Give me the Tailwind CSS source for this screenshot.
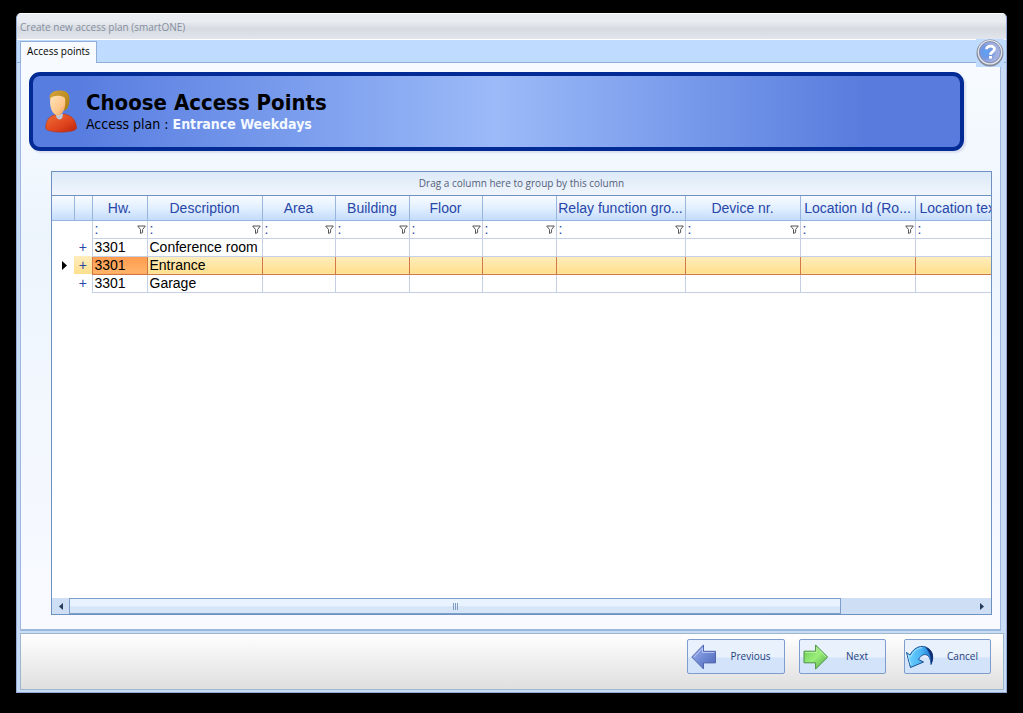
<!DOCTYPE html>
<html lang="en">
<head>
<meta charset="utf-8">
<title>Create new access plan (smartONE)</title>
<script src="https://cdn.jsdelivr.net/npm/@tailwindcss/browser@4"></script>
</head>
<body class="flex h-screen bg-black px-4 pt-[13px] pb-5 font-['Open_Sans',sans-serif] text-[10px] text-black">
<svg class="hidden" aria-hidden="true">
  <symbol id="funnel" viewBox="0 0 9 9"><path d="M.7 1h7.6L5.6 4.5V7.6L3.5 8.4V4.5Z" fill="#fff" stroke="#555" stroke-width="1"/></symbol>
</svg>
<main class="relative flex min-w-0 flex-1 flex-col rounded-t-[5px] border border-[#92aad5] border-t-white bg-[#c9dcf6] px-[3px] pb-[2px]">
  <header class="-mx-[3px] flex h-[26px] shrink-0 items-center rounded-t border-b border-white bg-linear-to-b from-[#e9ecf0] from-30% via-[#d6dae1] via-60% to-[#e2e6ec] px-[3px] pt-[2px] text-[#858e9e]"><h1>Create new access plan (smartONE)</h1></header>
  <nav class="-mx-[3px] flex h-[23px] shrink-0 items-end border-b border-[#8fafd9] bg-[#bfdbff] px-[3px]" role="tablist">
    <button role="tab" aria-selected="true" class="-mb-px h-[22px] w-[77px] border border-b-0 border-[#8fafd9] bg-[#f7fbff] pb-[2px] text-center whitespace-nowrap">Access points</button>
  </nav>
  <button aria-label="Help" class="absolute top-[25px] right-[2px] flex size-7 items-center justify-center bg-[#bfdbff]">
    <svg viewBox="0 0 28 28" class="size-7"><defs><radialGradient id="help" cx=".3" cy=".5"><stop offset="0" stop-color="#5aa2f6"/><stop offset=".55" stop-color="#7396e2"/><stop offset="1" stop-color="#a0b0e0"/></radialGradient></defs><circle cx="14" cy="14" r="13.5" fill="#858b9c"/><circle cx="14" cy="13.200" r="12.300" fill="#e3e5ec"/><circle cx="14" cy="13.200" r="10.600" fill="url(#help)" stroke="#818bae"/><path d="M10.500 10.300c.2-4 8-4.200 8-.3 0 2.500-4 2.800-4 5.800" fill="none" stroke="#fff" stroke-width="2.700"/><rect x="13" y="17" width="3" height="2.600" fill="#fff"/></svg>
  </button>
  <section class="mr-[2px] flex min-h-0 flex-1 flex-col border border-t-0 border-[#9db8de] border-b-2 bg-linear-to-b from-[#f7fbff] via-[#edf5fc] via-30% to-[#f8faff] pt-[9px] pr-2 pb-[14px] pl-2">
    <div class="mr-7 flex h-[79px] shrink-0 items-center rounded-[11px] border-4 border-[#032b95] bg-linear-to-r from-[#587de0] from-5% via-[#9cbaf8] via-50% to-[#587bdd] to-90% pl-3 shadow-[2px_2px_2px_#d9dfed]">
      <svg viewBox="0 0 32 43" class="h-[43px] w-8 shrink-0"><defs><linearGradient id="coat" x1="0" x2="1" y2="1"><stop offset="0" stop-color="#ef7035"/><stop offset=".6" stop-color="#df431e"/><stop offset="1" stop-color="#b8210b"/></linearGradient><linearGradient id="face" x2="1" y2="1"><stop offset="0" stop-color="#ffe4ba"/><stop offset=".6" stop-color="#ffc88c"/><stop offset="1" stop-color="#ef9950"/></linearGradient><linearGradient id="hair" x2="1" y2="1"><stop offset="0" stop-color="#d8a438"/><stop offset="1" stop-color="#a87c10"/></linearGradient></defs><path d="M5 10C3 3 9 .3 15 .5c7-.4 10 4 9.500 10-.2 4-1.500 5.500-2 8l-3 2Z" fill="url(#hair)"/><path d="M9 25C3 27 1 31 .6 38c0 5.500 31 5.500 31 0C31 31 28 26 20 24Z" fill="url(#coat)" stroke="#a83216" stroke-width=".5"/><path d="m10.500 24 1 3.500c1.500 2.500 4.500 2.500 6 0l.5-3.500Z" fill="#bfc6d4"/><path d="M5.500 8c4-3 10-3 14-.5 1.500 2 1.500 16-6 18C6.500 25.500 4 15 5.500 8Z" fill="url(#face)"/></svg>
      <div class="ml-[9px] font-['DejaVu_Sans_Condensed','DejaVu_Sans',sans-serif]">
        <h2 class="text-[22px] leading-6 font-bold">Choose Access Points</h2>
        <p class="text-sm leading-[18px]">Access plan : <b class="text-[#f4f8ff]">Entrance Weekdays</b></p>
      </div>
    </div>
    <div class="mt-5 ml-[22px] flex min-h-0 flex-1 flex-col overflow-hidden border border-[#6f91bf] bg-white">
      <div class="flex h-[23px] shrink-0 items-center justify-center bg-linear-to-b from-[#dce9f8] to-[#f0f5fc] text-[#54607a]">Drag a column here to group by this column</div>
      <div class="min-h-0 flex-1 overflow-hidden border-t border-[#6f91bf]">
        <table class="w-[979px] table-fixed border-collapse font-['Liberation_Sans',sans-serif] text-sm [&_td]:h-[18px] [&_td]:overflow-hidden [&_td]:border-[#c5cfe5] [&_td]:p-0 [&_td]:pl-[2px] [&_td]:leading-4 [&_td]:whitespace-nowrap">
          <colgroup><col class="w-[22px]"><col class="w-[18px]"><col class="w-[55px]"><col class="w-[115px]"><col class="w-[73px]"><col class="w-[74px]"><col class="w-[73px]"><col class="w-[74px]"><col class="w-[129px]"><col class="w-[115px]"><col class="w-[115px]"><col class="w-[116px]"></colgroup>
          <thead>
            <tr class="h-6 bg-linear-to-b from-[#f8fbff] via-[#e2efff] via-50% to-[#c4dcfd] text-[#2847a8] [&_th]:border-r [&_th]:border-b [&_th]:border-[#9ab5dd] [&_th]:p-0 [&_th]:font-normal [&_th]:whitespace-nowrap">
              <th></th><th></th><th>Hw.</th><th>Description</th><th>Area</th><th>Building</th><th>Floor</th><th></th><th>Relay function gro...</th><th>Device nr.</th><th>Location Id (Ro...</th><th class="pl-1! text-left">Location text</th>
            </tr>
          </thead>
          <tbody>
            <tr class="text-[#2847a8] [&_td]:border-r [&_td]:border-b [&_svg]:float-right [&_svg]:mt-1 [&_svg]:mr-px [&_svg]:size-[9px]">
              <td class="border-0!"></td><td class="border-b-0!"></td>
              <td>:<svg><use href="#funnel"/></svg></td><td>:<svg><use href="#funnel"/></svg></td><td>:<svg><use href="#funnel"/></svg></td><td>:<svg><use href="#funnel"/></svg></td><td>:<svg><use href="#funnel"/></svg></td><td>:<svg><use href="#funnel"/></svg></td><td>:<svg><use href="#funnel"/></svg></td><td>:<svg><use href="#funnel"/></svg></td><td>:<svg><use href="#funnel"/></svg></td><td>:<svg><use href="#funnel"/></svg></td>
            </tr>
            <tr class="[&_td]:border-r [&_td]:border-b">
              <td class="border-0!"></td><td class="border-b-0! p-0! text-center text-[#2847a8]"><button aria-label="Expand" class="block w-full leading-4">+</button></td><td>3301</td><td>Conference room</td><td></td><td></td><td></td><td></td><td></td><td></td><td></td><td></td>
            </tr>
            <tr class="[&_td]:border [&_td]:border-[#d07848] [&_td]:bg-linear-to-b [&_td]:from-[#ffedbd] [&_td]:to-[#ffdf8c]">
              <td class="border-0! bg-none!"><svg viewBox="0 0 5 9" class="ml-2 h-[9px] w-[5px]"><path d="M0 0l5 4.5L0 9Z"/></svg></td><td class="border-0! p-0! text-center text-[#2847a8]"><button aria-label="Expand" class="block w-full leading-4">+</button></td><td class="from-[#ff9a4e]! to-[#ffb469]!">3301</td><td>Entrance</td><td></td><td></td><td></td><td></td><td></td><td></td><td></td><td></td>
            </tr>
            <tr class="[&_td]:border-r [&_td]:border-b">
              <td class="border-0!"></td><td class="border-b-0! p-0! text-center text-[#2847a8]"><button aria-label="Expand" class="block w-full leading-4">+</button></td><td>3301</td><td>Garage</td><td></td><td></td><td></td><td></td><td></td><td></td><td></td><td></td>
            </tr>
          </tbody>
        </table>
      </div>
      <div class="flex h-4 shrink-0 bg-[#cddef5]" role="group" aria-label="Horizontal scroll">
        <button aria-label="Scroll left" class="flex w-[17px] items-center justify-center"><svg viewBox="0 0 4 7" class="h-[7px] w-1"><path d="M4 0L0 3.5 4 7Z" fill="#263a5e"/></svg></button>
        <div class="flex-1"><div class="flex h-full w-[85.4%] items-center justify-center gap-px border border-[#7d9fc9] bg-linear-to-b from-[#e9f2ff] from-50% to-[#d7e5f8] to-55%"><i class="h-[7px] w-px bg-[#7f9cc4]"></i><i class="h-[7px] w-px bg-[#7f9cc4]"></i><i class="h-[7px] w-px bg-[#7f9cc4]"></i></div></div>
        <button aria-label="Scroll right" class="flex w-[18px] items-center justify-center"><svg viewBox="0 0 4 7" class="h-[7px] w-1"><path d="M0 0l4 3.5L0 7Z" fill="#263a5e"/></svg></button>
      </div>
    </div>
  </section>
  <footer class="-mr-px mt-[2px] flex h-[57px] shrink-0 justify-end border border-[#9fb7cb] bg-linear-to-b from-white to-[#dfdfdf] pt-[5px] pr-3 text-[#24407c] [&_button]:flex [&_button]:h-[35px] [&_button]:items-center [&_button]:rounded-[2px] [&_button]:border [&_button]:border-[#7e9dcc] [&_button]:bg-linear-to-b [&_button]:from-[#e9f1fd] [&_button]:from-50% [&_button]:to-[#d3e3fa] [&_button]:to-55% [&_button]:pl-[3px] [&_span]:flex-1 [&_span]:text-center">
    <button class="mr-[14px] w-[98px]"><svg viewBox="0 0 26 26" class="size-[26px]"><defs><linearGradient id="prev" x2="1" y2="1"><stop offset="0" stop-color="#a7b8f1"/><stop offset=".5" stop-color="#728bd5"/><stop offset="1" stop-color="#4c66b8"/></linearGradient></defs><path d="M.8 13 12.5.9v6.4h12v11.6h-12V25Z" fill="url(#prev)" stroke="#5366ae"/><path d="M3 13 11.5 4v4.5h12" fill="none" stroke="#c5d1fa" stroke-width=".8"/></svg><span>Previous</span></button>
    <button class="mr-[18px] w-[87px]"><svg viewBox="0 0 26 26" class="size-[26px]"><defs><linearGradient id="next" x2="1" y2="1"><stop offset="0" stop-color="#67c352"/><stop offset=".5" stop-color="#9aee79"/><stop offset="1" stop-color="#52a548"/></linearGradient></defs><path d="M1 7.2h11.6V1L24.7 13 12.6 25v-6.2H1Z" fill="url(#next)" stroke="#4b9144"/><path d="M2 8.4h11.8V3.5l9.3 9.5" fill="none" stroke="#c3f6ac" stroke-width=".8"/></svg><span>Next</span></button>
    <button class="w-[87px]"><svg viewBox="0 0 30 26" class="-ml-[3px] h-[26px] w-[30px]"><defs><linearGradient id="undo" x2="1"><stop offset="0" stop-color="#70d5ff"/><stop offset=".6" stop-color="#47b0f2"/><stop offset="1" stop-color="#166fc8"/></linearGradient></defs><path d="M26 20.500c5-11-2-19-10.500-18Q9 3.500 5 11L1.500 8.500 5.500 23.500 18.500 18 13.500 15.500C17 8.500 25.500 8 26 20.500Z" fill="url(#undo)" stroke="#174f94" stroke-linejoin="round"/><path d="M20 3c8 2.500 10 10 6 17 .5-5-1-12-6-17" fill="#102e78"/><path d="M5.800 21 3 10.800 5.500 12.800Q10 4 17 3.600" fill="none" stroke="#c2efff" stroke-width=".8"/></svg><span>Cancel</span></button>
  </footer>
</main>
</body>
</html>
